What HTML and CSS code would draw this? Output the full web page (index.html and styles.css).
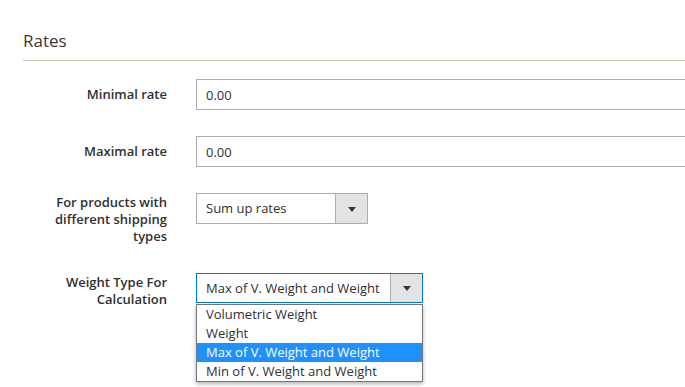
FILE: index.html
```html
<!DOCTYPE html>
<html lang="en">
<head>
  <meta charset="UTF-8" />
  <title>Rates</title>
  <link rel="stylesheet" href="styles.css">
</head>
<body>

<div class="section">
  <h3 class="section-title">Rates</h3>

  <div class="field">
    <label class="field-label">Minimal rate</label>
    <div class="field-control">
      <input type="text" class="input-text" value="0.00" />
    </div>
  </div>

  <div class="field">
    <label class="field-label">Maximal rate</label>
    <div class="field-control">
      <input type="text" class="input-text" value="0.00" />
    </div>
  </div>

  <div class="field">
    <label class="field-label multi">For products with different shipping types</label>
    <div class="field-control">
      <div class="select select-short">
        <span class="select-value">Sum up rates</span>
        <span class="select-arrow"></span>
      </div>
    </div>
  </div>

  <div class="field">
    <label class="field-label multi">Weight Type For Calculation</label>
    <div class="field-control dropdown">
      <div class="select select-long focused">
        <span class="select-value">Max of V. Weight and Weight</span>
        <span class="select-arrow"></span>
      </div>
      <!-- opened options list -->
      <ul class="select-options">
        <li>Volumetric Weight</li>
        <li>Weight</li>
        <li class="selected">Max of V. Weight and Weight</li>
        <li>Min of V. Weight and Weight</li>
      </ul>
    </div>
  </div>
</div>

</body>
</html>
```

FILE: styles.css
```css
html {
  overflow: hidden;
}
body {
  font-family: "Open Sans", Arial, sans-serif;
  background-color: #fff;
  color: #303030;
  margin: 0;
  height: 387px;
}
.section {
  padding: 0 0 0 23px;
}
.section-title {
  margin: 0 0 18px 0;
  padding: 30px 0 9px 0;
  font-size: 17px;
  line-height: 21px;
  font-weight: 400;
  color: #41362f;
  border-bottom: 1px solid #cac3b4;
}
.field {
  display: flex;
  align-items: flex-start;
  margin-bottom: 26px;
}
.field:last-child {
  margin-bottom: 0;
}
.field-label {
  flex: 0 0 134px;
  padding: 7px 0 0 10px;
  font-size: 13px;
  line-height: 17px;
  font-weight: 600;
  text-align: right;
  color: #303030;
}
.field-label.multi {
  padding-top: 1px;
  padding-bottom: 2px;
}
.field-control {
  margin-left: 29px;
}
.input-text {
  box-sizing: border-box;
  width: 520px;
  height: 31px;
  padding: 0 9px;
  border: 1px solid #adadad;
  border-radius: 0;
  font-family: "Open Sans", Arial, sans-serif;
  font-size: 13px;
  color: #303030;
  outline: none;
}
.select {
  box-sizing: border-box;
  display: flex;
  height: 31px;
  border: 1px solid #adadad;
  background: #fff;
  font-size: 13px;
}
.select-short {
  width: 172px;
}
.select-long {
  width: 227px;
  height: 30px;
}
.select.focused {
  border-color: #007bdb;
}
.select-value {
  flex: 1;
  padding-left: 9px;
  line-height: 29px;
  white-space: nowrap;
}
.select-long .select-value {
  line-height: 28px;
}
.select-arrow {
  position: relative;
  flex: 0 0 31px;
  border-left: 1px solid #adadad;
  background: #e3e3e3;
}
.select-arrow::after {
  content: "";
  position: absolute;
  left: 12px;
  top: 50%;
  margin-top: -2px;
  border-left: 4px solid transparent;
  border-right: 4px solid transparent;
  border-top: 5px solid #41362f;
}
.dropdown {
  position: relative;
}
.select-options {
  position: absolute;
  left: 0;
  top: 31px;
  box-sizing: border-box;
  width: 227px;
  margin: 0;
  padding: 0;
  list-style: none;
  background: #fff;
  border: 1px solid #767676;
  box-shadow: 0 2px 4px rgba(0, 0, 0, 0.3);
  font-size: 13px;
}
.select-options li {
  height: 19px;
  line-height: 19px;
  padding-left: 9px;
  white-space: nowrap;
}
.select-options li.selected {
  background: #1e90ff;
  color: #fff;
}
```
